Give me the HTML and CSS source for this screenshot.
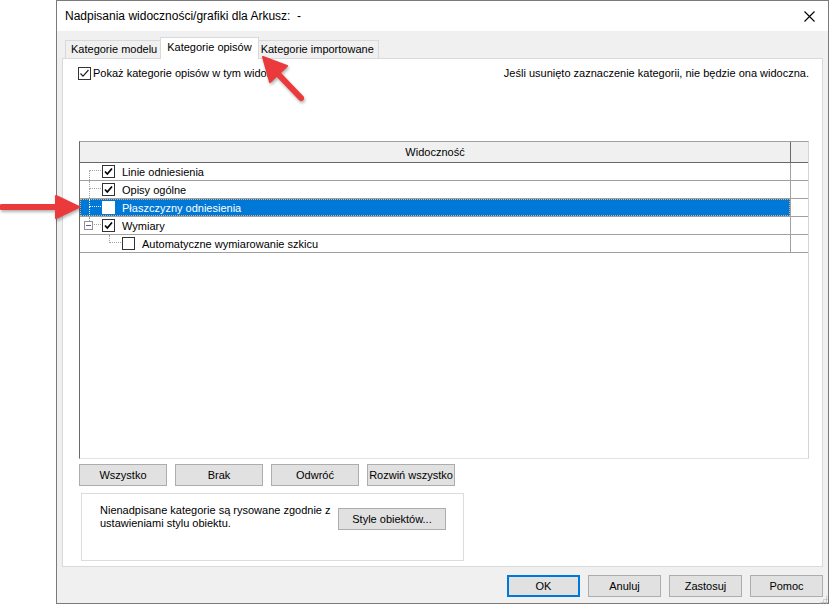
FILE: index.html
```html
<!DOCTYPE html>
<html>
<head>
  <title>Nadpisania widoczności/grafiki dla Arkusz: -</title>
  <link rel="stylesheet" href="styles.css">
</head>
<body>
  <div class="dialog">
    <!-- Title bar -->
    <div class="titlebar">
      <span class="title">Nadpisania widoczności/grafiki dla Arkusz:&nbsp; -</span>
      <span class="close">
        <svg width="11" height="11" viewBox="0 0 11 11"><path d="M0.5 0.5 L10.5 10.5 M10.5 0.5 L0.5 10.5" stroke="#000" stroke-width="1.1" fill="none"/></svg>
      </span>
    </div>

    <div class="dialog-body">
      <div class="tabs">
        <div class="tab">Kategorie modelu</div>
        <div class="tab active">Kategorie opisów</div>
        <div class="tab">Kategorie importowane</div>
      </div>

      <div class="panel">
        <div class="top-row">
          <label class="show-check">
            <span class="box"><svg width="11" height="11" viewBox="0 0 11 11"><polyline points="1.5,5.5 4,8.2 9.5,2" stroke="#222" stroke-width="1.2" fill="none"/></svg></span>
            Pokaż kategorie opisów w tym widoku
          </label>
          <span class="hint">Jeśli usunięto zaznaczenie kategorii, nie będzie ona widoczna.</span>
        </div>

        <!-- Visibility tree grid -->
        <div class="grid">
          <div class="grid-head">
            <div class="head-cell">Widoczność</div>
            <div class="head-cell side"></div>
          </div>

          <div class="grid-row">
            <div class="cell name">
              <span class="tree first"><span class="up"></span><span class="down"></span></span>
              <span class="box"><svg width="11" height="11" viewBox="0 0 11 11"><polyline points="2,5.5 4.3,8 9,2.5" stroke="#000" stroke-width="1.7" fill="none"/></svg></span>
              <span class="label">Linie odniesienia</span>
            </div>
            <div class="cell side"></div>
          </div>

          <div class="grid-row">
            <div class="cell name">
              <span class="tree"><span class="up"></span><span class="down"></span></span>
              <span class="box"><svg width="11" height="11" viewBox="0 0 11 11"><polyline points="2,5.5 4.3,8 9,2.5" stroke="#000" stroke-width="1.7" fill="none"/></svg></span>
              <span class="label">Opisy ogólne</span>
            </div>
            <div class="cell side"></div>
          </div>

          <div class="grid-row selected">
            <div class="cell name">
              <span class="tree"><span class="up"></span><span class="down"></span></span>
              <span class="box"></span>
              <span class="label">Płaszczyzny odniesienia</span>
            </div>
            <div class="cell side"></div>
          </div>

          <div class="grid-row">
            <div class="cell name">
              <span class="tree last"><span class="up"></span><span class="down"></span><span class="minus"></span></span>
              <span class="box"><svg width="11" height="11" viewBox="0 0 11 11"><polyline points="2,5.5 4.3,8 9,2.5" stroke="#000" stroke-width="1.7" fill="none"/></svg></span>
              <span class="label">Wymiary</span>
            </div>
            <div class="cell side"></div>
          </div>

          <div class="grid-row">
            <div class="cell name child">
              <span class="tree last"><span class="up"></span><span class="down"></span></span>
              <span class="box"></span>
              <span class="label">Automatyczne wymiarowanie szkicu</span>
            </div>
            <div class="cell side"></div>
          </div>
        </div>

        <div class="actions">
          <button class="btn wide">Wszystko</button>
          <button class="btn wide">Brak</button>
          <button class="btn wide">Odwróć</button>
          <button class="btn wide">Rozwiń wszystko</button>
        </div>

        <div class="groupbox">
          <p class="group-text">Nienadpisane kategorie są rysowane zgodnie z<br>ustawieniami stylu obiektu.</p>
          <button class="btn styles-btn">Style obiektów...</button>
        </div>
      </div>

      <div class="footer">
        <button class="btn small default">OK</button>
        <button class="btn small">Anuluj</button>
        <button class="btn small">Zastosuj</button>
        <button class="btn small">Pomoc</button>
        <span class="grip"></span>
      </div>
    </div>
  </div>

  <!-- Red annotation arrows drawn over the screenshot -->
  <svg class="arrows" width="831" height="606" viewBox="0 0 831 606">
    <g fill="#ea3a3c" stroke="#ea3a3c">
      <line x1="301" y1="98" x2="279" y2="75" stroke-width="6" stroke-linecap="round"/>
      <polygon points="263,57 287,66 270,82" stroke-width="2" stroke-linejoin="round"/>
      <line x1="2" y1="207" x2="60" y2="207" stroke-width="6" stroke-linecap="round"/>
      <polygon points="56,196 79,207 56,218" stroke-width="2" stroke-linejoin="round"/>
    </g>
  </svg>
</body>
</html>
```

FILE: styles.css
```css
* {
  box-sizing: border-box;
}

body {
  margin: 0;
  width: 831px;
  height: 606px;
  overflow: hidden;
  position: relative;
  background: #fff;
  font-family: "Liberation Sans", Arial, sans-serif;
  font-size: 11px;
  color: #000;
}

.dialog {
  margin-left: 56px;
  width: 773px;
  height: 604px;
  border: 1px solid #7a7a7a;
  background: #f0f0f0;
  display: flex;
  flex-direction: column;
}

.titlebar {
  height: 30px;
  background: #fff;
  display: flex;
  align-items: center;
  padding: 0 13px 0 8px;
  font-size: 12px;
}

.titlebar .title {
  flex: 1;
}

.close svg {
  display: block;
}

.dialog-body {
  flex: 1;
  padding: 6px 5px 0;
  display: flex;
  flex-direction: column;
}

/* Tabs */
.tabs {
  display: flex;
  align-items: flex-end;
  padding-left: 3px;
  white-space: nowrap;
}

.tab {
  height: 18px;
  line-height: 17px;
  padding: 0 5px;
  border: 1px solid #d9d9d9;
  border-bottom: none;
  margin-right: -1px;
  background: #f0f0f0;
}

.tab:last-child {
  padding: 0 4px 0 3px;
}

.tab.active {
  position: relative;
  z-index: 1;
  height: 22px;
  line-height: 19px;
  margin: 0 -2px -1px -2px;
  padding: 0 6px;
  background: #fff;
}

.panel {
  height: 509px;
  border: 1px solid #d9d9d9;
  background: #fff;
  padding: 7px 13px 0 15px;
}

.top-row {
  height: 14px;
  display: flex;
  align-items: center;
  justify-content: space-between;
  white-space: nowrap;
}

.show-check {
  display: flex;
  align-items: center;
}

.box {
  width: 13px;
  height: 13px;
  border: 1px solid #333;
  background: #fff;
  display: inline-block;
  flex: none;
}

.box svg {
  display: block;
}

.show-check .box {
  margin-right: 2px;
}

/* Grid */
.grid {
  margin: 61px 0 0 1px;
  width: 730px;
  height: 318px;
  border: 1px solid;
  border-color: #a0a0a0 #d4d4d4 #e3e3e3 #696969;
  background: #fff;
}

.grid-head,
.grid-row {
  display: grid;
  grid-template-columns: 1fr 18px;
}

.grid-head {
  height: 21px;
  background: #f0f0f0;
  border-bottom: 1px solid #696969;
}

.head-cell {
  line-height: 20px;
  text-align: center;
}

.head-cell.side {
  border-left: 1px solid #696969;
}

.grid-row {
  height: 18px;
  border-bottom: 1px solid #a0a0a0;
}

.cell.side {
  border-left: 1px solid #a0a0a0;
}

.cell.name {
  display: flex;
  align-items: center;
  padding-left: 9px;
}

.cell.name.child {
  padding-left: 29px;
}

.tree {
  position: relative;
  width: 12px;
  height: 17px;
  display: flex;
  flex-direction: column;
  flex: none;
  margin-right: 1px;
}

.tree .up {
  height: 8px;
  border-left: 1px dotted #a0a0a0;
  border-bottom: 1px dotted #a0a0a0;
}

.tree .down {
  flex: 1;
  border-left: 1px dotted #a0a0a0;
}

.tree.first .up {
  border-left-color: transparent;
}

.tree.last .down {
  border-left-color: transparent;
}

.tree .minus {
  position: absolute;
  left: -5px;
  top: 4px;
  width: 9px;
  height: 9px;
  border: 1px solid #919191;
  background: linear-gradient(#5b5b8f, #5b5b8f) center / 5px 1px no-repeat, #fff;
}

.label {
  margin-left: 7px;
  white-space: nowrap;
}

.grid-row.selected .cell.name {
  background: #0078d7;
  color: #fff;
  outline: 1px dotted #d6b27a;
  outline-offset: -1px;
}

.grid-row.selected .tree .up,
.grid-row.selected .tree .down {
  border-color: #fff;
}

.grid-row.selected .box {
  border-color: #fff;
}

/* Buttons */
.btn {
  height: 22px;
  padding: 0;
  border: 1px solid #adadad;
  background: #e1e1e1;
  font: inherit;
  color: #000;
  white-space: nowrap;
}

.btn.wide {
  width: 88px;
}

.btn.small {
  width: 73px;
}

.btn.default {
  border-color: #0078d7;
  box-shadow: inset 0 0 0 1px #0078d7;
}

.actions {
  display: flex;
  gap: 8px;
  margin: 5px 0 0 1px;
}

.groupbox {
  margin: 7px 0 0 3px;
  width: 383px;
  height: 68px;
  border: 1px solid #dcdcdc;
  padding: 10px 17px 0 18px;
  display: flex;
  align-items: flex-start;
}

.group-text {
  margin: 0;
  line-height: 13px;
  white-space: nowrap;
}

.styles-btn {
  margin: 4px 0 0 auto;
  width: 108px;
}

.footer {
  position: relative;
  display: flex;
  justify-content: flex-end;
  gap: 8px;
  padding-top: 8px;
}

/* resize grip in the corner */
.grip {
  position: absolute;
  right: -5px;
  bottom: -7px;
  width: 9px;
  height: 9px;
  background: radial-gradient(circle, #b8b8b8 45%, transparent 50%) 0 0 / 3px 3px;
  clip-path: polygon(100% 0, 100% 100%, 0 100%);
}

.arrows {
  position: absolute;
  top: 0;
  left: 0;
  pointer-events: none;
  filter: drop-shadow(1px 2px 1.5px rgba(0, 0, 0, 0.3));
}
```
